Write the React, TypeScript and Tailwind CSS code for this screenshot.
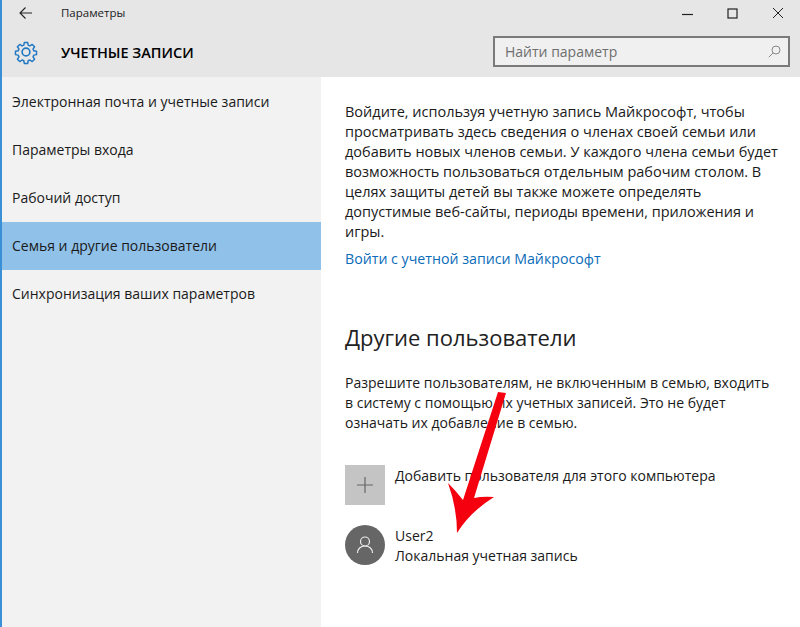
import React from "react";

const items = [
  "Электронная почта и учетные записи",
  "Параметры входа",
  "Рабочий доступ",
  "Семья и другие пользователи",
  "Синхронизация ваших параметров",
];

export default function App() {
  return (
    <div className="relative w-[800px] h-[627px] overflow-hidden bg-white flex flex-col border-l-2 border-[#3a8fd6] font-['Open_Sans','Noto_Sans',sans-serif] text-[14px] text-[#1a1a1a]">
      <header className="h-[77px] shrink-0 bg-[#e6e6e6] flex flex-col">
        <div className="h-[26px] flex items-center pl-[17px]">
          <svg width="13" height="12" viewBox="0 0 13 12" fill="none" stroke="#222" strokeWidth="1.1"><path d="M13 6H1M6.500 .5 1 6l5.500 5.500" /></svg>
          <span className="ml-[29px] text-[11.500px]">Параметры</span>
          <div className="ml-auto flex items-center text-[#222]">
            <svg width="11" height="11" viewBox="0 0 11 11" className="mr-[34px]" stroke="#222" strokeWidth="1.200"><path d="M0 6.500H11" /></svg>
            <svg width="11" height="11" viewBox="0 0 11 11" fill="none" className="mr-[34px]" stroke="#222" strokeWidth="1.200"><rect x="1" y="1" width="9" height="9" /></svg>
            <svg width="12" height="12" viewBox="0 0 12 12" className="mr-[16px]" stroke="#222" strokeWidth="1"><path d="M1 1 11 11M11 1 1 11" /></svg>
          </div>
        </div>
        <div className="flex-1 flex items-center pl-[11px] pr-[10px]">
          <svg width="26" height="26" viewBox="0 0 24 24" fill="none" stroke="#1f78c4" strokeWidth="1.500" strokeLinejoin="round" className="mt-[1px]">
            <path d="M10.300 2.200h3.400l.5 2.800 1.800.8 2.400-1.600 2.400 2.400-1.600 2.400.8 1.800 2.800.5v3.400l-2.800.5-.8 1.800 1.600 2.400-2.400 2.400-2.400-1.600-1.800.8-.5 2.800h-3.400l-.5-2.800-1.800-.8-2.400 1.600-2.400-2.400 1.600-2.400-.8-1.800-2.800-.5v-3.400l2.800-.5.8-1.800-1.600-2.400 2.400-2.400 2.400 1.600 1.800-.8z" transform="translate(1.200 1.200) scale(.9)" />
            <circle cx="12" cy="12" r="3.600" />
          </svg>
          <h1 className="ml-[22px] mt-[3px] text-[14.5px] font-semibold text-black">УЧЕТНЫЕ ЗАПИСИ</h1>
          <div className="ml-auto w-[297px] h-[31px] border-2 border-[#7a7a7a] bg-[#f0f0f0] flex items-center pl-[10px] pr-[7px] text-[#6e6e6e]">
            <span>Найти параметр</span>
            <svg width="13" height="13" viewBox="0 0 13 13" fill="none" stroke="#888" strokeWidth="1" className="ml-auto"><circle cx="8" cy="5" r="4" /><path d="M5 8 .8 12.200" /></svg>
          </div>
        </div>
      </header>
      <div className="flex-1 flex min-h-0">
        <nav className="w-[319px] shrink-0 bg-[#f2f2f2] pt-[1px]">
          {items.map((t, i) => (
            <div key={t} className={"h-[48px] flex items-center pl-[10px] pb-[2px] " + (i === 3 ? "bg-[#90c1e9]" : "")}>{t}</div>
          ))}
        </nav>
        <main className="flex-1 pl-[24px] pt-[25px] leading-[20px]">
          <p className="w-[440px] text-[14.5px]">
            Войдите, используя учетную запись Майкрософт, чтобы<br />
            просматривать здесь сведения о членах своей семьи или<br />
            добавить новых членов семьи. У каждого члена семьи будет<br />
            возможность пользоваться отдельным рабочим столом. В<br />
            целях защиты детей вы также можете определять<br />
            допустимые веб-сайты, периоды времени, приложения и<br />
            игры.
          </p>
          <a className="block mt-[7px] text-[14.2px] text-[#0a6cb8]">Войти с учетной записи Майкрософт</a>
          <h2 className="mt-[53px] text-[22px] leading-[30px] text-[#222]">Другие пользователи</h2>
          <p className="mt-[21px] w-[450px]">
            Разрешите пользователям, не включенным в семью, входить<br />
            в систему с помощью их учетных записей. Это не будет<br />
            означать их добавление в семью.
          </p>
          <div className="mt-[32px] flex">
            <div className="w-[40px] h-[40px] bg-[#c4c4c4] flex items-center justify-center">
              <svg width="16" height="16" viewBox="0 0 16 16" stroke="#666" strokeWidth="1.200"><path d="M8 0V16M0 8H16" /></svg>
            </div>
            <span className="ml-[10px] mt-[1px]">Добавить пользователя для этого компьютера</span>
          </div>
          <div className="mt-[20px] flex">
            <div className="w-[40px] h-[40px] rounded-full bg-[#666666] flex items-center justify-center">
              <svg width="18" height="20" viewBox="0 0 18 20" fill="none" stroke="#eee" strokeWidth="1.200"><circle cx="9" cy="6.500" r="4.500" /><path d="M1.500 18c0-4 3-7 7.500-7s7.500 3 7.500 7" /></svg>
            </div>
            <div className="ml-[10px] mt-[1px]">
              <div>User2</div>
              <div>Локальная учетная запись</div>
            </div>
          </div>
        </main>
      </div>
      <svg width="70" height="150" viewBox="0 0 70 150" className="absolute left-[438px] top-[388px]">
        <path d="M58 4 66 5 34 110Q43 108 54 109Q30 124 17 145Q17 120 8 95Q16 103 23 112Z" fill="#f5000f" />
      </svg>
    </div>
  );
}
